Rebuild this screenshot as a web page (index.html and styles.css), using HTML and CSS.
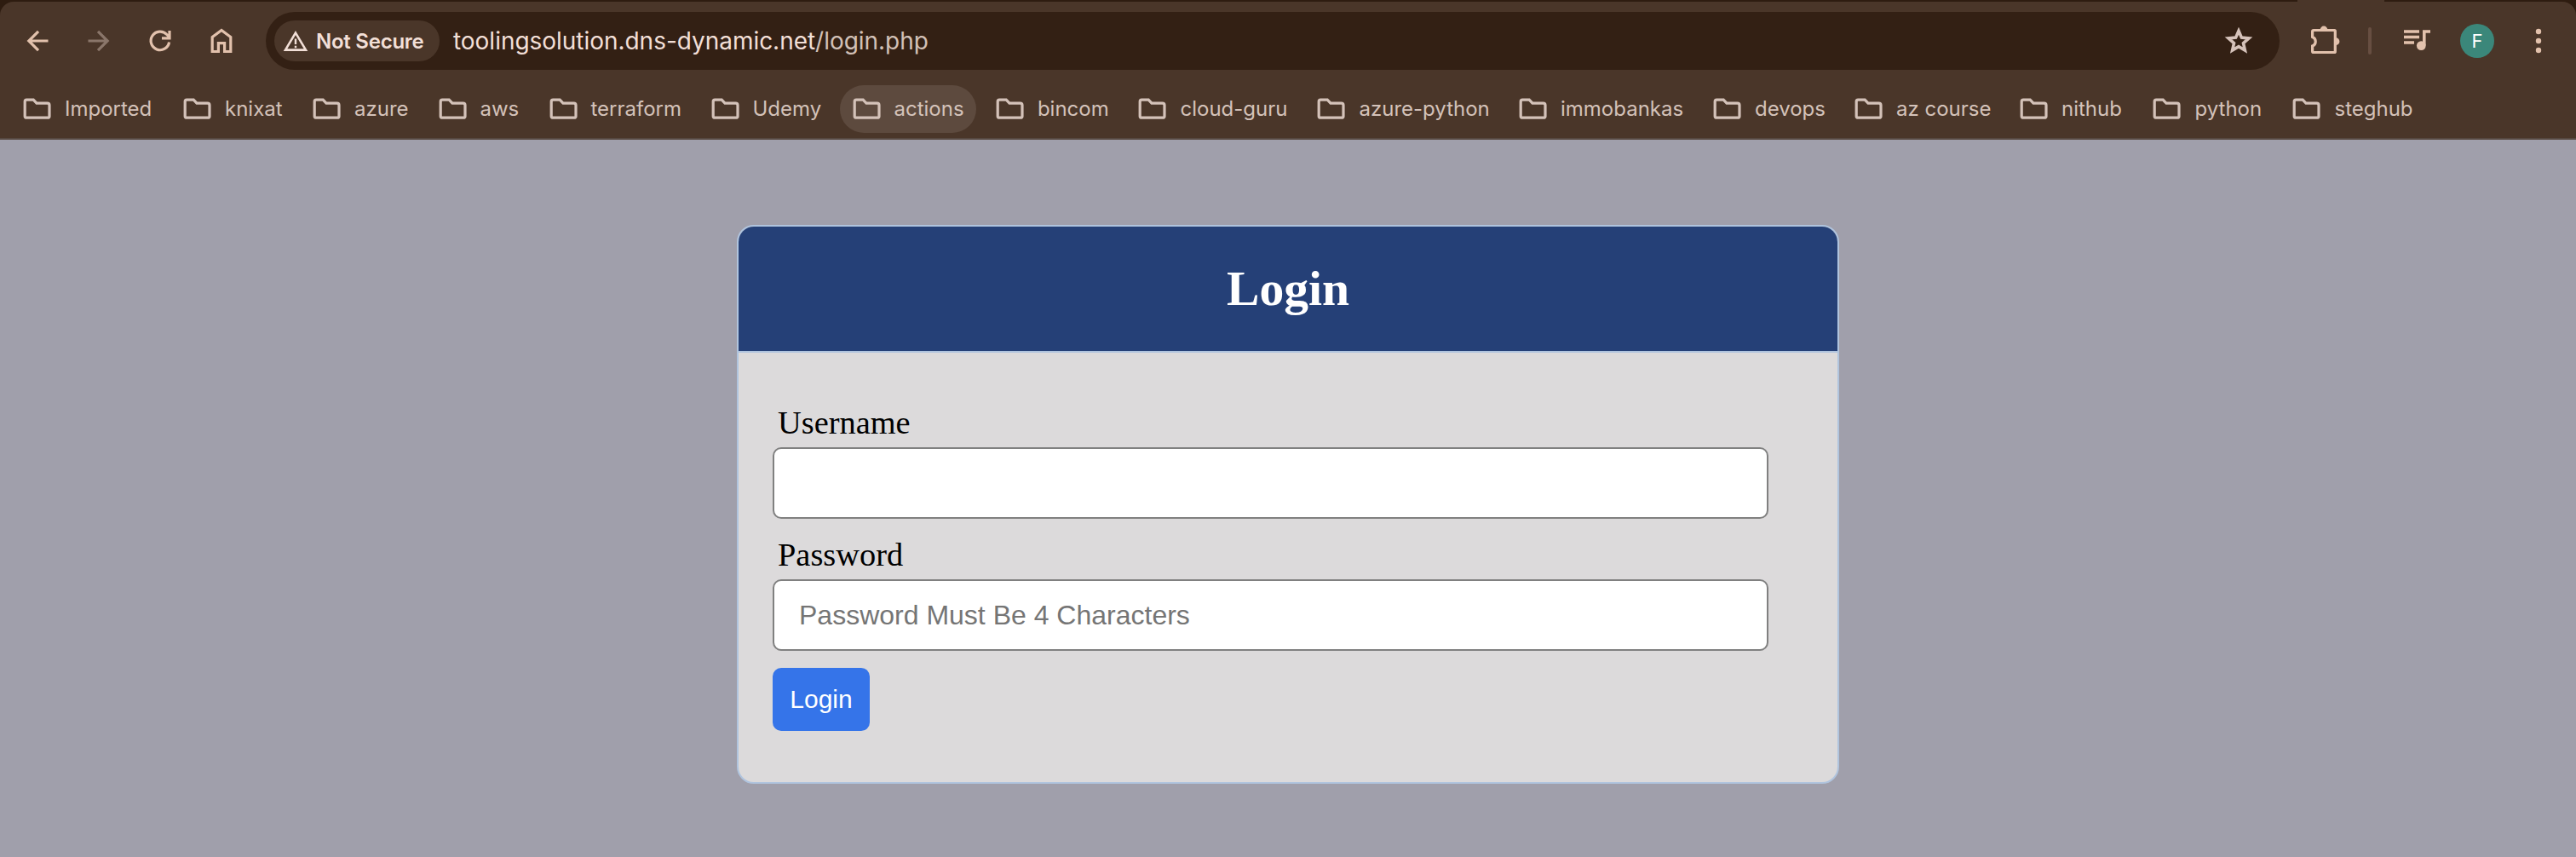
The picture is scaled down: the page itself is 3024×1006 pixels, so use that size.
FILE: index.html
```html
<!DOCTYPE html>
<html lang="en">
<head>
<meta charset="utf-8">
<title>Login</title>
<link rel="stylesheet" href="styles.css">
</head>
<body>
<svg class="defs" width="0" height="0" aria-hidden="true">
  <symbol id="folder" viewBox="0 0 34 26"><path d="M4.2 2.2H12.2L16 6.2H28.6Q31 6.2 31 8.6V21.4Q31 23.2 28.8 23.2H4.4Q2.2 23.2 2.2 21.4V4.2Q2.2 2.2 4.2 2.2Z" fill="none" stroke="currentColor" stroke-width="3.2"/></symbol>
</svg>
<header class="browser">
  <div class="tabstrip"><span class="active-tab"></span></div>
  <div class="chrome">
    <div class="toolbar">
      <nav class="nav">
        <svg class="ico" viewBox="0 0 32 32"><path d="M28.500 16H6M17 4.800L5.800 16L17 27.200" fill="none" stroke="currentColor" stroke-width="3.200"/></svg>
        <svg class="ico dim" viewBox="0 0 32 32"><path d="M3.500 16H26M15 4.800L26.200 16L15 27.200" fill="none" stroke="currentColor" stroke-width="3.200"/></svg>
        <svg class="ico" viewBox="0 0 32 32"><path d="M26.600 17.500A10.800 10.800 0 1 1 23.800 8.500L26.700 11.500M27 4V12.800H18" fill="none" stroke="currentColor" stroke-width="3.200"/></svg>
        <svg class="ico" viewBox="0 0 32 32"><path d="M5.200 28.500V11.500L16 3.400L26.800 11.500V28.500H19.600V18.600H12.400V28.500Z" fill="none" stroke="currentColor" stroke-width="3.200"/></svg>
      </nav>
      <div class="omnibox">
        <div class="chip">
          <svg class="warn" viewBox="0 0 30 26"><path d="M15 3.600L27 23.600H3Z" fill="none" stroke="currentColor" stroke-width="2.600"/><path d="M15 10.400V17M15 18.800V21.200" stroke="currentColor" stroke-width="2.400"/></svg>
          <span class="chip-text">Not Secure</span>
        </div>
        <div class="url">toolingsolution.dns-dynamic.net<span class="path">/login.php</span></div>
        <svg class="star" viewBox="0 0 34 32"><path d="M17 4.200L20.400 12.100L29 12.900L22.500 18.600L24.400 27L17 22.600L9.600 27L11.500 18.600L5 12.900L13.600 12.100Z" fill="none" stroke="currentColor" stroke-width="3.600"/></svg>
      </div>
      <div class="actions">
        <svg class="puzzle" viewBox="0 0 36 36"><path d="M5 6.500H29.500Q30.300 6.500 30.300 7.500V31.500Q30.300 32.500 29.300 32.500H5Q3.600 32.500 3.600 31.200V24.900A5.600 5.600 0 0 0 3.600 14.400V8Q3.600 6.500 5 6.500Z" fill="none" stroke="currentColor" stroke-width="3.200"/><path d="M12.600 6A4.400 4.400 0 0 1 21.400 6ZM31 15.300A4.400 4.400 0 0 1 31 24.100Z" fill="currentColor"/></svg>
        <span class="divider"></span>
        <svg class="music" viewBox="0 0 34 28"><path d="M1 3H19M1 9.500H19M1 16H13" stroke="currentColor" stroke-width="3.400"/><path d="M24.800 19V3H32" fill="none" stroke="currentColor" stroke-width="3.600"/><circle cx="21.300" cy="19.600" r="5.400" fill="currentColor"/></svg>
        <span class="avatar">F</span>
        <svg class="dots" viewBox="0 0 8 30"><circle cx="4" cy="4" r="3.200"/><circle cx="4" cy="15" r="3.200"/><circle cx="4" cy="26" r="3.200"/></svg>
      </div>
    </div>
    <nav class="bookmarks">
      <a class="bm"><svg><use href="#folder"/></svg><span>Imported</span></a>
      <a class="bm"><svg><use href="#folder"/></svg><span>knixat</span></a>
      <a class="bm"><svg><use href="#folder"/></svg><span>azure</span></a>
      <a class="bm"><svg><use href="#folder"/></svg><span>aws</span></a>
      <a class="bm"><svg><use href="#folder"/></svg><span>terraform</span></a>
      <a class="bm"><svg><use href="#folder"/></svg><span>Udemy</span></a>
      <a class="bm hover"><svg><use href="#folder"/></svg><span>actions</span></a>
      <a class="bm"><svg><use href="#folder"/></svg><span>bincom</span></a>
      <a class="bm"><svg><use href="#folder"/></svg><span>cloud-guru</span></a>
      <a class="bm"><svg><use href="#folder"/></svg><span>azure-python</span></a>
      <a class="bm"><svg><use href="#folder"/></svg><span>immobankas</span></a>
      <a class="bm"><svg><use href="#folder"/></svg><span>devops</span></a>
      <a class="bm"><svg><use href="#folder"/></svg><span>az course</span></a>
      <a class="bm"><svg><use href="#folder"/></svg><span>nithub</span></a>
      <a class="bm"><svg><use href="#folder"/></svg><span>python</span></a>
      <a class="bm"><svg><use href="#folder"/></svg><span>steghub</span></a>
    </nav>
  </div>
</header>
<main class="page">
  <section class="card">
    <h2 class="card-title">Login</h2>
    <form class="form">
      <label class="label" for="user">Username</label>
      <input class="input" id="user" type="text">
      <label class="label" for="pass">Password</label>
      <input class="input" id="pass" type="password" placeholder="Password Must Be 4 Characters">
      <button class="btn" type="button">Login</button>
    </form>
  </section>
</main>
</body>
</html>
```
FILE: styles.css
```css
* { box-sizing: border-box; }

body {
  margin: 0;
  height: 1006px;
  overflow: hidden;
  background: #a09fab;
  font-family: "Liberation Serif", serif;
}

svg { display: block; flex: none; }
.defs { position: absolute; }

/* Browser frame */
.browser {
  height: 164px;
  background: #2e1c10;
  font-family: Inter, "Liberation Sans", sans-serif;
}

.tabstrip { height: 2px; padding-left: 2697px; }
.active-tab {
  display: block;
  width: 102px;
  height: 2px;
  background: #4a3629;
}

.chrome {
  height: 162px;
  border-radius: 16px 16px 0 0;
  border-bottom: 2px solid #574941;
  background: #4a3629;
}

.toolbar {
  display: flex;
  height: 92px;
  align-items: center;
  padding-left: 28px;
}

.nav {
  display: flex;
  gap: 40px;
  color: #e2c1ac;
}
.ico { width: 32px; height: 32px; }
.dim { color: #8a766a; }

.omnibox {
  display: flex;
  align-items: center;
  width: 2364px;
  height: 68px;
  margin-left: 36px;
  padding: 0 31px 0 10px;
  border-radius: 34px;
  background: #332014;
  color: #f2dfd7;
}

.chip {
  display: flex;
  align-items: center;
  gap: 9px;
  width: 194px;
  height: 48px;
  padding-left: 10px;
  border-radius: 24px;
  background: #4a3629;
}
.warn { width: 30px; height: 26px; }
.chip-text {
  font-size: 24px;
  font-weight: 600;
  letter-spacing: -0.25px;
  white-space: nowrap;
}

.url {
  flex: 1;
  margin-left: 16px;
  font-size: 28px;
  letter-spacing: -0.03px;
  white-space: nowrap;
}
.path { color: #d2c0b7; }
.star { width: 34px; height: 32px; color: #d5c2ba; }

.actions {
  display: flex;
  align-items: center;
  margin-left: 35px;
  color: #e2c1ac;
}
.puzzle { width: 36px; height: 36px; margin-top: -3px; }
.divider { width: 4px; height: 32px; margin-left: 33px; border-radius: 2px; background: #674e41; }
.music { width: 34px; height: 28px; margin-left: 37px; }
.avatar {
  width: 40px;
  height: 40px;
  margin-left: 33px;
  border-radius: 50%;
  background: #3b877a;
  color: #fff;
  font-size: 22px;
  line-height: 40px;
  text-align: center;
}
.dots { width: 8px; height: 30px; margin-left: 48px; fill: currentColor; }

.bookmarks {
  display: grid;
  grid-template-columns: 188px 152px 147.5px 130px 190px 166px 168.4px 167.6px 210px 236.5px 228px 166px 194px 156.5px 164px 160px;
  height: 68px;
  padding: 6px 0 6px 12px;
  color: #d4c2b9;
}
.bm {
  display: flex;
  align-items: center;
  height: 56px;
  margin-right: 8px;
  padding-left: 15px;
  border-radius: 28px;
  font-size: 24px;
  white-space: nowrap;
}
.bm svg { width: 34px; height: 26px; margin-right: 15px; }
.bm span { padding-bottom: 2px; }
.hover { background: #5d4a3e; }

/* Login page */
.page { padding-top: 100px; }

.card {
  width: 1294px;
  height: 656px;
  margin: 0 auto;
  overflow: hidden;
  border: 2px solid #b0c4de;
  border-radius: 20px;
  background: #dcdadb;
}
.card-title {
  height: 148px;
  margin: 0;
  border-bottom: 2px solid #b0c4de;
  background: #254077;
  color: #fff;
  font-size: 57.6px;
  line-height: 146px;
  text-align: center;
}

.form {
  display: flex;
  flex-direction: column;
  align-items: flex-start;
  padding: 60px 40px 0;
}
.label {
  height: 44px;
  margin: 0 0 7px 6px;
  font-size: 38.4px;
  line-height: 44px;
}
.input {
  width: 1169px;
  height: 84px;
  margin-bottom: 20px;
  padding: 0 29px;
  border: 2px solid #808080;
  border-radius: 10px;
  background: #fff;
  font: 32px "Liberation Sans", sans-serif;
}
.input::placeholder { color: #757575; }
.btn {
  width: 114px;
  height: 74px;
  padding: 0;
  border: 0;
  border-radius: 10px;
  background: #3574e9;
  color: #fff;
  font: 30px "Liberation Sans", sans-serif;
}
```
